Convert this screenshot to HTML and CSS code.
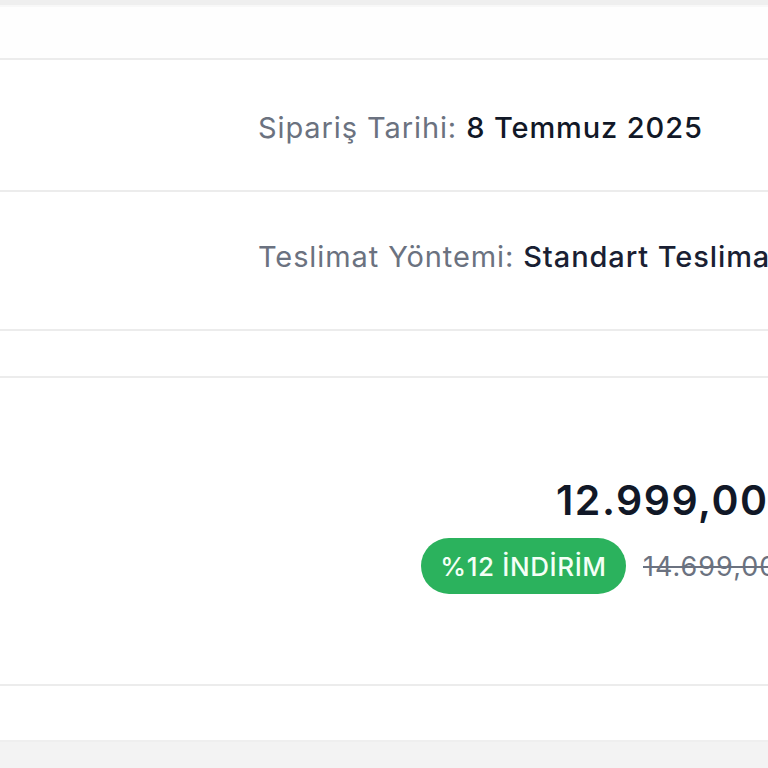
FILE: index.html
```html
<!DOCTYPE html>
<html lang="tr">
<head>
<meta charset="utf-8">
<link rel="stylesheet" href="styles.css">
</head>
<body>
<div class="page">
  <div class="topbar"></div>
  <div class="row row-empty-top"></div>
  <div class="row row-info row-date">
    <span class="label">Sipariş Tarihi:</span> <span class="value">8 Temmuz 2025</span>
  </div>
  <div class="row row-info row-ship">
    <span class="label">Teslimat Yöntemi:</span> <span class="value strong">Standart Teslimat</span>
  </div>
  <div class="row row-empty-mid"></div>
  <div class="row row-price">
    <div class="price-block">
      <div class="price">12.999,00 TL</div>
      <div class="discount-line">
        <span class="badge">%12 İNDİRİM</span>
        <span class="old-price">14.699,00 TL</span>
      </div>
    </div>
  </div>
  <div class="row row-empty-bottom"></div>
  <div class="footer"></div>
</div>
</body>
</html>
```

FILE: styles.css
```css
html, body {
  margin: 0;
  padding: 0;
  width: 768px;
  height: 768px;
  overflow: hidden;
  background: #ffffff;
  font-family: Inter, "Noto Sans", "Liberation Sans", sans-serif;
}

.page {
  display: flex;
  flex-direction: column;
  width: 768px;
  height: 768px;
  overflow: hidden;
}

.topbar {
  height: 5px;
  background: #efefef;
  border-bottom: 2px solid #f8f8f8;
  flex: none;
}

.row {
  flex: none;
  border-bottom: 2px solid #ececec;
  box-sizing: border-box;
  display: flex;
  align-items: center;
  white-space: nowrap;
}

.row-empty-top {
  height: 53px;
  background: #fefefe;
}

.row-info {
  padding-left: 258px;
  font-size: 29px;
  letter-spacing: 0.9px;
}

.row-date {
  height: 132px;
  padding-top: 4px;
}

.row-ship {
  height: 139px;
  padding-bottom: 8px;
}

.label {
  color: #6b7280;
  margin-right: 9px;
}

.value {
  color: #111827;
  font-weight: 500;
}

.value.strong {
  color: #1a1f33;
}

.row-empty-mid {
  height: 47px;
}

.row-price {
  height: 308px;
  padding-left: 421px;
  padding-top: 10px;
}

.price-block {
  display: flex;
  flex-direction: column;
  gap: 16px;
}

.price {
  padding-left: 135px;
  font-size: 41px;
  font-weight: 600;
  color: #111827;
  letter-spacing: 1.5px;
  line-height: 44px;
}

.discount-line {
  display: flex;
  align-items: center;
  gap: 17px;
}

.badge {
  display: inline-flex;
  align-items: center;
  justify-content: center;
  width: 205px;
  height: 56px;
  box-sizing: border-box;
  border-radius: 28px;
  background: #2bb25d;
  color: #f4fff6;
  font-size: 26px;
  font-weight: 500;
  letter-spacing: 0.6px;
}

.old-price {
  font-size: 27px;
  color: #6b7280;
  letter-spacing: 1px;
  text-decoration: line-through;
  text-decoration-thickness: 2px;
}

.row-empty-bottom {
  height: 54px;
  border-bottom: none;
}

.footer {
  flex: 1;
  background: #f3f3f3;
  border-top: 2px solid #efefef;
}
```
